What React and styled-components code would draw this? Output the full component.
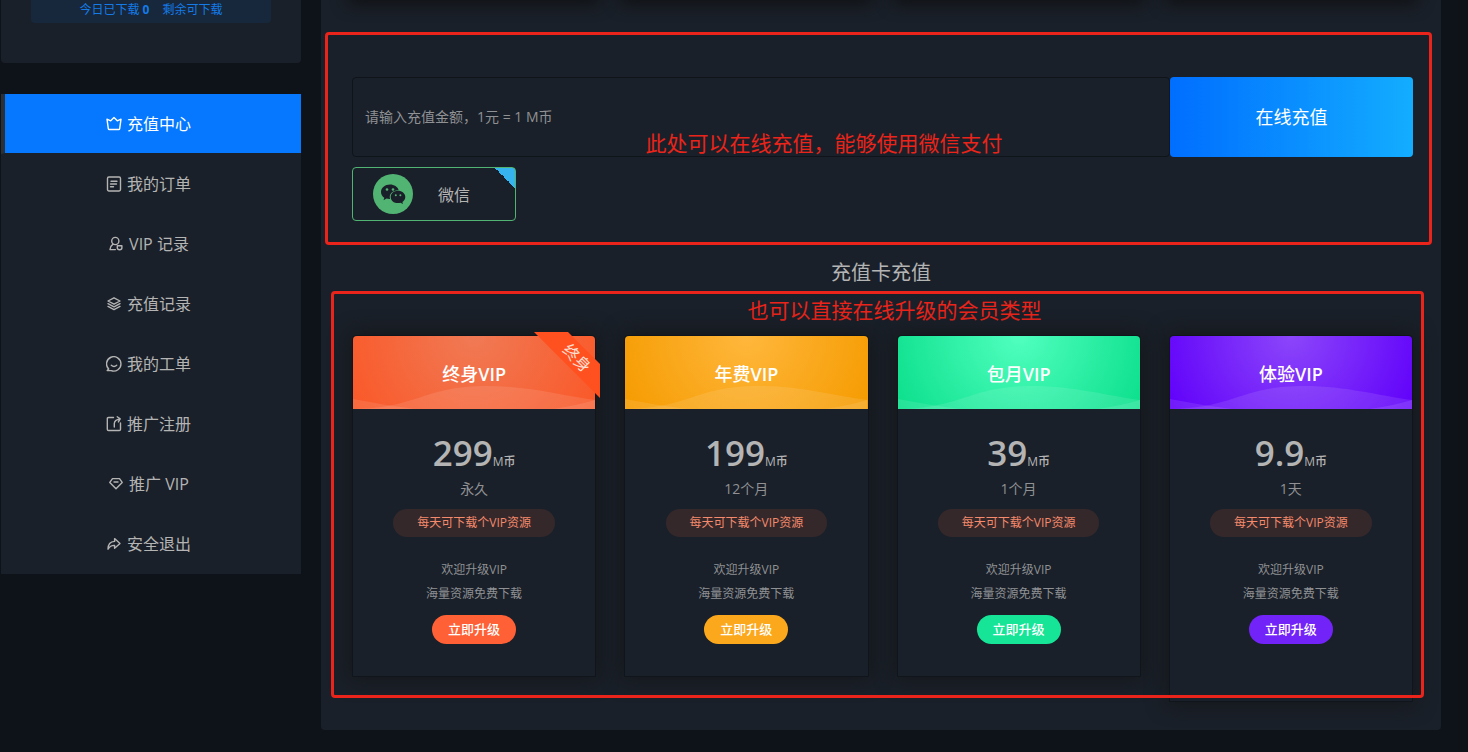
import React from "react";
import styled, { createGlobalStyle } from "styled-components";

const GlobalStyle = createGlobalStyle`
    * {
        box-sizing: border-box;
    }
    body {
        margin: 0;
        background-color: #0e131a;
        color: #b4b4b4;
        font-family: "Open Sans", "Noto Sans CJK SC", sans-serif;
        font-size: 14px;
        overflow-x: hidden;
    }
    button,
    input {
        font-family: inherit;
    }
    p,
    h2,
    h3 {
        margin: 0;
        padding: 0;
    }
`;

const icons = {
    crown: (
        <path d="M1 3.2 4.7 4.8 8 1.5l3.3 3.3L15 3.2l-1.3 9.4q-.1.9-1 .9H3.3q-.9 0-1-.9z" />
    ),
    order: (
        <>
            <rect x="1.5" y="1" width="13" height="14" rx="1.4" />
            <path d="M5 5.2h6M4.5 8h6M4.5 10.8h3" />
        </>
    ),
    user: (
        <>
            <circle cx="7.3" cy="5" r="3.6" />
            <path d="M5 8.2Q2.4 10 2 13.6h5.4M9.3 9.8h4.6v2q0 2-2.3 2-2.3 0-2.3-2z" />
        </>
    ),
    layers: (
        <path d="M8 1.8 14 5 8 8.2 2 5zM2 7.7l6 3.2 6-3.2M2 10.4l6 3.2 6-3.2" />
    ),
    chat: (
        <>
            <path d="M2.7 13A7.2 7.2 0 1 1 5.2 14.6H1.2z" />
            <path d="M5.3 9.3q2.7 2.4 5.4 0" />
        </>
    ),
    share: (
        <path d="M7.5 1.5h-5q-1.2 0-1.2 1.2v10.6q0 1.2 1.2 1.2h10.8q1.2 0 1.2-1.2V7M8.3 11V7.5q.2-3.6 5.7-4.5M11.2.8l3 2.1-1.8 3" />
    ),
    diamond: <path d="M4.5 2.6h7l2.7 3.8L8 12.8 1.8 6.4zM6 6h4" />,
    exit: (
        <path d="M8.6 2.6 14 7.4l-5.4 4.8V9.4Q4.4 9.2 2 13.2q0-7.4 6.6-7.8z" />
    ),
};

const menu = [
    { icon: "crown", label: "充值中心", active: true },
    { icon: "order", label: "我的订单" },
    { icon: "user", label: "VIP 记录" },
    { icon: "layers", label: "充值记录" },
    { icon: "chat", label: "我的工单" },
    { icon: "share", label: "推广注册" },
    { icon: "diamond", label: "推广 VIP" },
    { icon: "exit", label: "安全退出" },
];

const plans = [
    { name: "终身", price: "299", term: "永久", light: "#f07a55", dark: "#fa5828", button: "#ff6035", ribbon: "终身" },
    { name: "年费", price: "199", term: "12个月", light: "#ffb73c", dark: "#f59b00", button: "#fca81c" },
    { name: "包月", price: "39", term: "1个月", light: "#50ffbe", dark: "#0bdf8c", button: "#16e597" },
    { name: "体验", price: "9.9", term: "1天", light: "#8c46fa", dark: "#6000fa", button: "#7223f8", tall: true },
];

const MenuIcon = ({ name }) => (
    <Icon viewBox="0 0 16 16" aria-hidden="true">
        {icons[name]}
    </Icon>
);

const Wave = () => (
    <WaveSvg viewBox="0 0 242 24" preserveAspectRatio="none" aria-hidden="true">
        <path d="M0 24C66 23 70 1 134 1c42 0 76 10 108 14v9z" />
        <path d="M0 14Q30 20 62 24H0zM200 24q22-3 42-9v9z" />
    </WaveSvg>
);

const WechatLogo = () => (
    <Logo viewBox="0 0 40 40" aria-hidden="true">
        <circle cx="20" cy="20" r="20" fill="#52b473" />
        <path
            fill="#1a2029"
            d="M17 10.5c-5 0-9 3.3-9 7.4 0 2.4 1.2 4.4 3.3 5.8l-.8 2.5 3.1-1.6c1.1.3 2.2.5 3.5.4-1.6-5.1 3-9 8.600-8.700C24.700 12.700 21.200 10.500 17 10.500z"
        />
        <path
            fill="#1a2029"
            d="M32.300 22.900c0-3.400-3.400-6.100-7.300-6.100-4.200 0-7.300 2.800-7.300 6.100 0 3.500 3.200 6.200 7.300 6.200.9 0 1.700-.1 2.500-.4l2.500 1.300-.6-2.100c1.800-1.200 2.900-3 2.900-5z"
        />
        <g fill="#52b473">
            <circle cx="14" cy="15.500" r="1.300" />
            <circle cx="20" cy="15.500" r="1.300" />
            <circle cx="22.800" cy="21.200" r="1" />
            <circle cx="27.400" cy="21.200" r="1" />
        </g>
    </Logo>
);

const PlanCard = ({ plan }) => (
    <Card $tall={plan.tall}>
        <CardHead $light={plan.light} $dark={plan.dark}>
            <PlanName>
                {plan.name}
                <b>VIP</b>
            </PlanName>
            <Wave />
        </CardHead>
        {plan.ribbon && (
            <RibbonClip>
                <Ribbon>{plan.ribbon}</Ribbon>
            </RibbonClip>
        )}
        <Price>
            {plan.price}
            <Unit>M币</Unit>
        </Price>
        <Term>{plan.term}</Term>
        <Quota>每天可下载个VIP资源</Quota>
        <Perk>欢迎升级VIP</Perk>
        <Perk>海量资源免费下载</Perk>
        <UpgradeButton type="button" $color={plan.button}>
            立即升级
        </UpgradeButton>
    </Card>
);

const App = () => (
    <>
        <GlobalStyle />
        <Page>
            <Sidebar>
                <Profile>
                    <Downloads>
                        <span>
                            今日已下载 <b>0</b>
                        </span>
                        <span>剩余可下载</span>
                    </Downloads>
                </Profile>
                <Nav>
                    {menu.map((item) => (
                        <NavLink key={item.label} href="#" $active={item.active}>
                            <MenuIcon name={item.icon} />
                            {item.label}
                        </NavLink>
                    ))}
                </Nav>
            </Sidebar>
            <Main>
                <CardShadows>
                    {plans.map((plan) => (
                        <CardShadow key={plan.name} />
                    ))}
                </CardShadows>
                <RechargeSection>
                    <RechargeForm onSubmit={(e) => e.preventDefault()}>
                        <AmountInput
                            aria-label="充值金额"
                            placeholder="请输入充值金额，1元 = 1 M币"
                        />
                        <PayButton type="submit">在线充值</PayButton>
                    </RechargeForm>
                    <PayMethod type="button">
                        <WechatLogo />
                        微信
                    </PayMethod>
                    <RechargeNote>此处可以在线充值，能够使用微信支付</RechargeNote>
                </RechargeSection>
                <SectionTitle>充值卡充值</SectionTitle>
                <PlanSection>
                    <PlanNote>也可以直接在线升级的会员类型</PlanNote>
                    <Plans>
                        {plans.map((plan) => (
                            <PlanCard key={plan.name} plan={plan} />
                        ))}
                    </Plans>
                </PlanSection>
            </Main>
        </Page>
    </>
);

const Page = styled.div`
    display: flex;
    align-items: flex-start;
    gap: 20px;
    padding: 0 27px 22px 1px;
`;
const Sidebar = styled.aside`
    flex: 0 0 300px;
`;
const Profile = styled.section`
    padding: 0 30px 40px;
    margin-bottom: 31px;
    border-radius: 0 0 4px 4px;
    background-color: #1a2029;
`;
const Downloads = styled.div`
    display: flex;
    justify-content: center;
    gap: 13px;
    height: 23px;
    border-radius: 0 0 4px 4px;
    background-color: #17283c;
    color: #147be8;
    font-size: 12px;
    line-height: 20px;
`;
const Nav = styled.nav`
    background-color: #1a2029;
`;
const NavLink = styled.a`
    display: flex;
    align-items: center;
    justify-content: center;
    gap: 5px;
    height: 60px;
    border-left: 4px solid ${({ $active }) => ($active ? "#2b3038" : "transparent")};
    border-bottom: 1px solid transparent;
    padding: 0 9px 2px 0;
    background-color: ${({ $active }) => ($active ? "#0578ff" : "transparent")};
    background-clip: padding-box;
    color: ${({ $active }) => ($active ? "#fff" : "#b4b4b4")};
    font-size: 16px;
    text-decoration: none;
`;
const Icon = styled.svg`
    width: 16px;
    height: 16px;
    margin-top: 2px;
    fill: none;
    stroke: currentColor;
    stroke-width: 1.4;
    stroke-linejoin: round;
    stroke-linecap: round;
`;
const Main = styled.main`
    flex: 1;
    min-width: 0;
    padding-bottom: 32px;
    border-radius: 0 0 4px 4px;
    background-color: #1a2029;
`;
const CardShadows = styled.div`
    display: grid;
    grid-template-columns: repeat(4, 1fr);
    gap: 28px;
    height: 32px;
    padding: 0 28px 0 31px;
    overflow: hidden;
`;
const CardShadow = styled.div`
    height: 20px;
    margin-top: -20px;
    box-shadow: 0 0 16px 4px #101113;
`;
const MarkedSection = styled.section`
    position: relative;
    border: 3px solid transparent;
    &::after {
        content: "";
        position: absolute;
        inset: -3px;
        border: 3px solid #ea241a;
        border-radius: 4px;
        pointer-events: none;
    }
`;
const RechargeSection = styled(MarkedSection)`
    margin: 0 9px 0 4px;
    padding: 42px 16px 21px 24px;
`;
const RechargeForm = styled.form`
    display: flex;
    height: 80px;
    margin-bottom: 10px;
`;
const AmountInput = styled.input`
    flex: 1;
    min-width: 0;
    padding: 0 12px 2px;
    border: 1px solid #0f131a;
    border-radius: 4px;
    background-color: transparent;
    color: #b4b4b4;
    font-size: 14px;
    &::placeholder {
        color: #8f9194;
    }
`;
const PayButton = styled.button`
    flex: 0 0 243px;
    padding: 0 0 3px;
    border: none;
    border-radius: 4px;
    background: linear-gradient(90deg, #006eff, #13adff);
    color: #fff;
    font-size: 18px;
    cursor: pointer;
`;
const PayMethod = styled.button`
    display: flex;
    align-items: center;
    gap: 25px;
    width: 164px;
    height: 54px;
    padding: 0 20px;
    border: 1px solid #52b473;
    border-radius: 4px;
    background: linear-gradient(45deg, transparent 50%, #35b4ef 50%) top right / 20px 20px no-repeat;
    color: #b4b4b4;
    font-size: 16px;
    cursor: pointer;
`;
const Logo = styled.svg`
    width: 40px;
    height: 40px;
`;
const Note = styled.p`
    color: #ea241a;
    font-size: 21px;
    line-height: 28px;
    text-align: center;
`;
const RechargeNote = styled(Note)`
    position: absolute;
    top: 94px;
    left: 0;
    right: 0;
    padding-right: 109px;
    pointer-events: none;
`;
const SectionTitle = styled.h2`
    padding-top: 10px;
    color: #b4b4b4;
    font-size: 20px;
    font-weight: 400;
    line-height: 36px;
    text-align: center;
`;
const PlanSection = styled(MarkedSection)`
    height: 407px;
    margin: 0 17px 0 10px;
    padding: 2px 8px 0 18px;
`;
const PlanNote = styled(Note)`
    padding-left: 24px;
    margin-bottom: 11px;
`;
const Plans = styled.div`
    display: grid;
    grid-template-columns: repeat(4, 1fr);
    align-items: start;
    gap: 28px;
`;
const Card = styled.article`
    position: relative;
    display: flex;
    flex-direction: column;
    align-items: center;
    padding-bottom: ${({ $tall }) => ($tall ? "57px" : "32px")};
    border: 1px solid #10151c;
    border-radius: 4px 4px 0 0;
    background-color: #1a2029;
    box-shadow: 0 0 20px 2px #15171a;
`;
const CardHead = styled.header`
    position: relative;
    align-self: stretch;
    height: 73px;
    border-radius: 4px 4px 0 0;
    background: radial-gradient(circle at 50% 0, ${({ $light }) => $light}, ${({ $dark }) => $dark});
`;
const PlanName = styled.h3`
    color: #fff;
    font-size: 18px;
    font-weight: 500;
    line-height: 76px;
    text-align: center;
    b {
        font-weight: 600;
    }
`;
const WaveSvg = styled.svg`
    position: absolute;
    left: 0;
    bottom: 0;
    width: 100%;
    height: 24px;
    fill: #fff;
    fill-opacity: 0.1;
`;
const RibbonClip = styled.div`
    position: absolute;
    top: -4px;
    right: -5px;
    width: 66px;
    height: 69px;
    overflow: hidden;
`;
const Ribbon = styled.span`
    position: absolute;
    top: 14px;
    right: -37px;
    width: 120px;
    background-color: #ff511f;
    color: #ffdfd2;
    font-size: 16px;
    line-height: 24px;
    text-align: center;
    transform: rotate(45deg);
`;
const Price = styled.p`
    margin-top: 28px;
    color: #b4b4b4;
    font-size: 35px;
    font-weight: 600;
    line-height: 32px;
`;
const Unit = styled.small`
    font-size: 12px;
    font-weight: 500;
`;
const Term = styled.p`
    margin-top: 1px;
    color: #8f9194;
    font-size: 14px;
    line-height: 20px;
`;
const Quota = styled.p`
    margin: 10px 0 21px;
    padding: 0 24px;
    border-radius: 14px;
    background-color: #34282b;
    color: #f58a6c;
    font-size: 12px;
    line-height: 28px;
`;
const Perk = styled.p`
    color: #8f9194;
    font-size: 12px;
    line-height: 24px;
`;
const UpgradeButton = styled.button`
    height: 29px;
    margin-top: 9px;
    padding: 0 16px 2px;
    border: none;
    border-radius: 15px;
    background-color: ${({ $color }) => $color};
    color: #fff;
    font-size: 13px;
    font-weight: 500;
    cursor: pointer;
`;

export default App;
